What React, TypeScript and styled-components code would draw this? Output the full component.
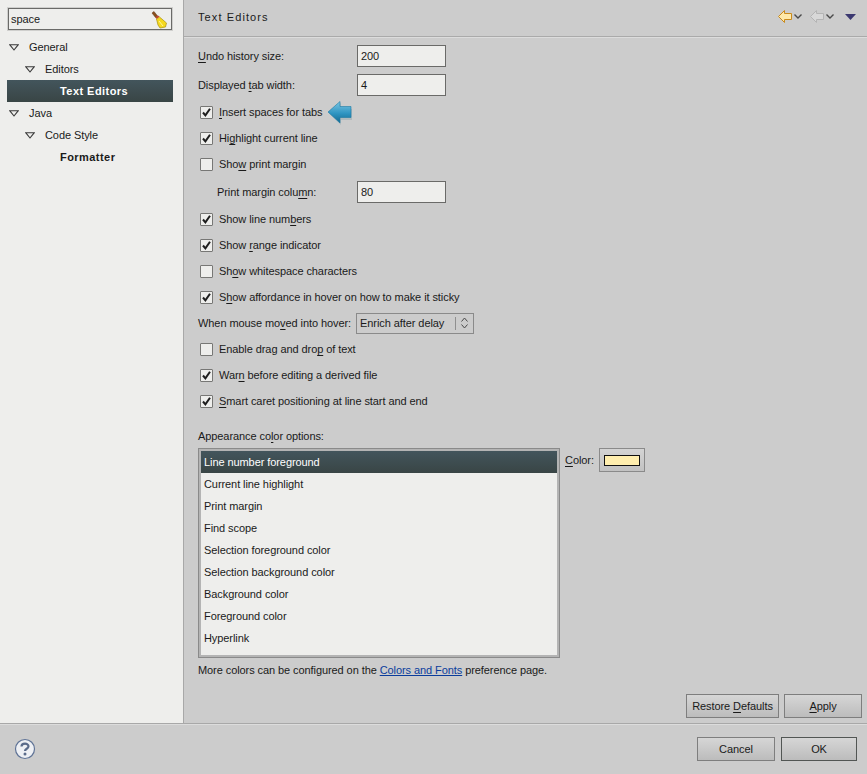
import React from 'react'
import styled, { createGlobalStyle } from 'styled-components'

const GlobalStyle = createGlobalStyle`
    html, body {
        margin: 0;
        padding: 0;
        background: #cccccc;
    }
    body {
        color: #1a1a1a;
        font-family: "Liberation Sans", Arial, sans-serif;
        font-size: 11px;
        letter-spacing: -0.08px;
    }
    u {
        text-underline-offset: 2px;
    }
`

const Shell = styled.div`
    display: flex;
    flex-direction: column;
    height: 774px;
    width: 867px;
    overflow: hidden;
`

const Main = styled.div`
    display: flex;
    flex: 1;
    min-height: 0;
`

const Sidebar = styled.aside`
    background: #eeeeec;
    border-right: 1px solid #a8a8a8;
    box-sizing: border-box;
    display: flex;
    flex-direction: column;
    padding: 8px 10px 0 7px;
    width: 184px;
`

const FilterBox = styled.div`
    align-items: center;
    background: #eeeeec;
    border: 1px solid #6a6a68;
    box-shadow: 0 0 0 1px #cfcfcd;
    box-sizing: border-box;
    display: flex;
    height: 22px;
    justify-content: space-between;
    margin: 0 0 6px 1px;
    padding: 0 3px 0 2px;
    width: 164px;
`

const TreeRow = styled.div<{ $depth: number; $selected?: boolean; $bold?: boolean }>`
    align-items: center;
    background: ${({ $selected }) => ($selected ? 'linear-gradient(#43555c, #394545)' : 'transparent')};
    box-sizing: border-box;
    color: ${({ $selected }) => ($selected ? '#ffffff' : '#1a1a1a')};
    display: flex;
    flex: 0 0 22px;
    font-weight: ${({ $bold }) => ($bold ? 700 : 400)};
    gap: 10px;
    letter-spacing: ${({ $bold }) => ($bold ? '0.45px' : '-0.08px')};
    padding-left: ${({ $depth }) => 2 + $depth * 16}px;
    width: 166px;
`

const TwistySpacer = styled.span`
    width: 9px;
`

const Content = styled.section`
    display: flex;
    flex: 1;
    flex-direction: column;
    min-width: 0;
`

const TitleBar = styled.header`
    align-items: center;
    border-bottom: 1px solid #aaaaaa;
    box-shadow: 0 1px 0 #dcdcdc;
    box-sizing: border-box;
    display: flex;
    height: 37px;
    justify-content: space-between;
    letter-spacing: 1.1px;
    padding: 0 11px 3px 14px;
`

const NavIcons = styled.div`
    align-items: center;
    display: flex;
    gap: 2px;
`

const NavGap = styled.span<{ $w: number }>`
    width: ${({ $w }) => $w}px;
`

const Form = styled.div`
    display: flex;
    flex: 1;
    flex-direction: column;
    padding: 8px 0 0 14px;
`

const FieldRow = styled.div<{ $top: number; $indent?: number }>`
    align-items: center;
    display: flex;
    height: 22px;
    margin-top: ${({ $top }) => $top}px;
    padding-left: ${({ $indent }) => $indent ?? 0}px;
`

const FieldLabel = styled.span<{ $indent?: number }>`
    width: ${({ $indent }) => 159 - ($indent ?? 0)}px;
`

const TextInput = styled.div`
    align-items: center;
    background: #eeeeec;
    border: 1px solid #6a6a68;
    box-sizing: border-box;
    display: flex;
    height: 22px;
    padding-left: 3px;
    width: 89px;
`

const CheckRow = styled.div<{ $first?: boolean }>`
    align-items: center;
    display: flex;
    gap: 6px;
    height: 26px;
    margin-top: ${({ $first }) => ($first ? 3 : 0)}px;
    padding-left: 2px;
`

const CheckBox = styled.span`
    align-items: center;
    background: #eeeeec;
    border: 1px solid #777775;
    border-radius: 1px;
    box-sizing: border-box;
    display: flex;
    height: 13px;
    justify-content: center;
    width: 13px;
`

const HintArrow = styled.span`
    display: flex;
    margin-left: -1px;
`

const ComboRow = styled.div`
    align-items: center;
    display: flex;
    gap: 5px;
    height: 26px;
`

const Combo = styled.div`
    align-items: center;
    border: 1px solid #8a8a8a;
    box-sizing: border-box;
    display: flex;
    height: 21px;
    justify-content: space-between;
    padding-left: 3px;
    width: 118px;
`

const ComboArrows = styled.span`
    align-items: center;
    border-left: 1px solid #8f8f8f;
    display: flex;
    height: 13px;
    justify-content: center;
    width: 17px;
`

const SectionLabel = styled.div`
    line-height: 16px;
    margin-top: 14px;
`

const ColorSection = styled.div`
    display: flex;
    gap: 5px;
    margin-top: 4px;
`

const ColorList = styled.div`
    background: #eeeeec;
    border: 1px solid #8a8a8a;
    box-shadow: inset 0 0 0 2px #b4b4b4;
    box-sizing: border-box;
    display: flex;
    flex-direction: column;
    height: 210px;
    padding: 2px 2px 3px 2px;
    width: 362px;
`

const ColorItem = styled.div<{ $selected?: boolean }>`
    align-items: center;
    background: ${({ $selected }) => ($selected ? 'linear-gradient(#43555c, #394545)' : 'transparent')};
    box-sizing: border-box;
    color: ${({ $selected }) => ($selected ? '#ffffff' : '#1a1a1a')};
    display: flex;
    flex: 0 0 22px;
    padding: 0 0 1px 3px;
`

const ColorControl = styled.div`
    align-items: center;
    display: flex;
    gap: 5px;
    height: 24px;
`

const ColorButton = styled.div`
    align-items: center;
    background: linear-gradient(#d4d4d4, #c2c2c2);
    border: 1px solid #8a8a8a;
    box-sizing: border-box;
    display: flex;
    height: 24px;
    justify-content: center;
    width: 46px;
`

const Swatch = styled.span`
    background: #ffeeae;
    border: 1px solid #111111;
    box-sizing: border-box;
    height: 11px;
    width: 36px;
`

const Note = styled.p`
    line-height: 14px;
    margin: 5px 0 0;
`

const PrefLink = styled.a`
    color: #0a3c9c;
    text-decoration: underline;
`

const ButtonRow = styled.div<{ $pad: string; $gap: number }>`
    display: flex;
    gap: ${({ $gap }) => $gap}px;
    justify-content: flex-end;
    padding: ${({ $pad }) => $pad};
`

const Button = styled.button<{ $w: number; $default?: boolean }>`
    background: linear-gradient(#d6d6d6, #bcbcbc);
    border: 1px solid ${({ $default }) => ($default ? '#525654' : '#7e7e7e')};
    border-radius: 0;
    color: #1a1a1a;
    font: inherit;
    height: 24px;
    letter-spacing: inherit;
    padding: 0;
    width: ${({ $w }) => $w}px;
`

const Footer = styled.footer`
    align-items: center;
    border-top: 1px solid #a8a8a8;
    box-shadow: inset 0 1px 0 #dcdcdc;
    box-sizing: border-box;
    display: flex;
    flex: 0 0 51px;
    justify-content: space-between;
    padding: 0 0 0 14px;
`

const Broom = () => (
    <svg width="17" height="19" viewBox="0 0 17 19">
        <path d="M1 3 L3 1.5 L6.5 6 L4.5 7.5 Z" fill="#8a4f1c" stroke="#5c3210" strokeWidth="0.5" />
        <path d="M4.5 7.5 L7 5.5 L8.5 6.8 L5.5 9 Z" fill="#c8402a" />
        <path d="M5.5 9 L8.5 7 L15.5 13 L14.5 17 L9 18 L7 15 Z" fill="#f5d91e" stroke="#a88f10" strokeWidth="0.7" />
        <path d="M8 11 L12 16" stroke="#fff59a" strokeWidth="1" />
    </svg>
)

const BlueArrow = () => (
    <svg width="25" height="25" viewBox="0 0 25 25">
        <defs>
            <linearGradient id="hintBlue" x1="0" y1="0" x2="0" y2="1">
                <stop offset="0" stopColor="#7cc6e2" />
                <stop offset="0.55" stopColor="#2f95c2" />
                <stop offset="1" stopColor="#14688f" />
            </linearGradient>
        </defs>
        <path d="M2 13 L14 3 L14 9 L25 9 L25 20 L14 20 L14 25 Z" fill="#8fa3ab" opacity="0.45" />
        <path d="M1 12 L13 1.5 L13 6.5 L24 6.5 L24 17.5 L13 17.5 L13 23 Z" fill="url(#hintBlue)" stroke="#1b7aa4" strokeWidth="0.6" />
    </svg>
)

const NavArrow = ({ fill, stroke }: { fill: string; stroke: string }) => (
    <svg width="14" height="13" viewBox="0 0 14 13">
        <path d="M0.5 6.5 L6.5 0.5 L6.5 3.5 L13.5 3.5 L13.5 9.5 L6.5 9.5 L6.5 12.5 Z" fill={fill} stroke={stroke} />
    </svg>
)

const NavChevron = () => (
    <svg width="8" height="5" viewBox="0 0 8 5">
        <path d="M0.5 0.5 L4 4 L7.5 0.5" fill="none" stroke="#4a4a4a" strokeWidth="1.4" />
    </svg>
)

const ViewMenu = () => (
    <svg width="11" height="6" viewBox="0 0 11 6">
        <path d="M0 0 H11 L5.5 6 Z" fill="#3b3870" />
    </svg>
)

const Twisty = () => (
    <svg width="10" height="7" viewBox="0 0 10 7">
        <path d="M0.7 0.7 H9.3 L5 6 Z" fill="#eeeeec" stroke="#3a3a3a" strokeWidth="1.1" />
    </svg>
)

const Tick = () => (
    <svg width="11" height="11" viewBox="0 0 11 11">
        <path d="M2 5.5 L4.4 8.4 L9 1.8" fill="none" stroke="#1e1e1e" strokeWidth="2" />
    </svg>
)

const UpDown = () => (
    <svg width="7" height="12" viewBox="0 0 7 12">
        <path d="M0.5 4.5 L3.5 1 L6.5 4.5 M0.5 7.5 L3.5 11 L6.5 7.5" fill="none" stroke="#4a4a4a" />
    </svg>
)

const HelpIcon = () => (
    <svg width="22" height="22" viewBox="0 0 22 22">
        <circle cx="11" cy="11" r="9.5" fill="#eef0f4" stroke="#5f7396" strokeWidth="1.2" />
        <path d="M7.5 8.5 C7.5 4.8 14.5 4.8 14.5 8.3 C14.5 10.8 11 10.6 11 13" fill="none" stroke="#5a6b8a" strokeWidth="2.2" />
        <circle cx="11" cy="16" r="1.5" fill="#5a6b8a" />
    </svg>
)

function Check({ checked, children, first }: { checked?: boolean; children: React.ReactNode; first?: boolean }) {
    return (
        <CheckRow $first={first}>
            <CheckBox>{checked && <Tick />}</CheckBox>
            <span>{children}</span>
        </CheckRow>
    )
}

const colorItems = [
    'Current line highlight',
    'Print margin',
    'Find scope',
    'Selection foreground color',
    'Selection background color',
    'Background color',
    'Foreground color',
    'Hyperlink',
]

export default function App() {
    return (
        <Shell>
            <GlobalStyle />
            <Main>
                <Sidebar>
                    <FilterBox>
                        <span>space</span>
                        <Broom />
                    </FilterBox>
                    <TreeRow $depth={0}><Twisty />General</TreeRow>
                    <TreeRow $depth={1}><Twisty />Editors</TreeRow>
                    <TreeRow $depth={2} $selected $bold><TwistySpacer />Text Editors</TreeRow>
                    <TreeRow $depth={0}><Twisty />Java</TreeRow>
                    <TreeRow $depth={1}><Twisty />Code Style</TreeRow>
                    <TreeRow $depth={2} $bold><TwistySpacer />Formatter</TreeRow>
                </Sidebar>
                <Content>
                    <TitleBar>
                        <span>Text Editors</span>
                        <NavIcons>
                            <NavArrow fill="#ffe9a8" stroke="#c98a1c" />
                            <NavChevron />
                            <NavGap $w={4} />
                            <NavArrow fill="#d8d8d8" stroke="#b4b4b4" />
                            <NavChevron />
                            <NavGap $w={7} />
                            <ViewMenu />
                        </NavIcons>
                    </TitleBar>
                    <Form>
                        <FieldRow $top={0}>
                            <FieldLabel><u>U</u>ndo history size:</FieldLabel>
                            <TextInput>200</TextInput>
                        </FieldRow>
                        <FieldRow $top={7}>
                            <FieldLabel>Displayed <u>t</u>ab width:</FieldLabel>
                            <TextInput>4</TextInput>
                        </FieldRow>
                        <CheckRow $first>
                            <CheckBox><Tick /></CheckBox>
                            <span><u>I</u>nsert spaces for tabs</span>
                            <HintArrow><BlueArrow /></HintArrow>
                        </CheckRow>
                        <Check checked>Hi<u>g</u>hlight current line</Check>
                        <Check>Sho<u>w</u> print margin</Check>
                        <FieldRow $top={4} $indent={19}>
                            <FieldLabel $indent={19}>Print margin colu<u>m</u>n:</FieldLabel>
                            <TextInput>80</TextInput>
                        </FieldRow>
                        <Check checked first>Show line num<u>b</u>ers</Check>
                        <Check checked>Show <u>r</u>ange indicator</Check>
                        <Check>Sh<u>o</u>w whitespace characters</Check>
                        <Check checked>S<u>h</u>ow affordance in hover on how to make it sticky</Check>
                        <ComboRow>
                            <span>When mouse mo<u>v</u>ed into hover:</span>
                            <Combo>
                                Enrich after delay
                                <ComboArrows><UpDown /></ComboArrows>
                            </Combo>
                        </ComboRow>
                        <Check>Enable drag and dro<u>p</u> of text</Check>
                        <Check checked>War<u>n</u> before editing a derived file</Check>
                        <Check checked><u>S</u>mart caret positioning at line start and end</Check>
                        <SectionLabel>Appearance co<u>l</u>or options:</SectionLabel>
                        <ColorSection>
                            <ColorList>
                                <ColorItem $selected>Line number foreground</ColorItem>
                                {colorItems.map(item => (
                                    <ColorItem key={item}>{item}</ColorItem>
                                ))}
                            </ColorList>
                            <ColorControl>
                                <span><u>C</u>olor:</span>
                                <ColorButton><Swatch /></ColorButton>
                            </ColorControl>
                        </ColorSection>
                        <Note>
                            More colors can be configured on the <PrefLink>Colors and Fonts</PrefLink> preference page.
                        </Note>
                    </Form>
                    <ButtonRow $pad="0 5px 5px 0" $gap={5}>
                        <Button $w={93}>Restore <u>D</u>efaults</Button>
                        <Button $w={78}><u>A</u>pply</Button>
                    </ButtonRow>
                </Content>
            </Main>
            <Footer>
                <HelpIcon />
                <ButtonRow $pad="0 10px 0 0" $gap={6}>
                    <Button $w={78}>Cancel</Button>
                    <Button $w={76} $default>OK</Button>
                </ButtonRow>
            </Footer>
        </Shell>
    )
}
